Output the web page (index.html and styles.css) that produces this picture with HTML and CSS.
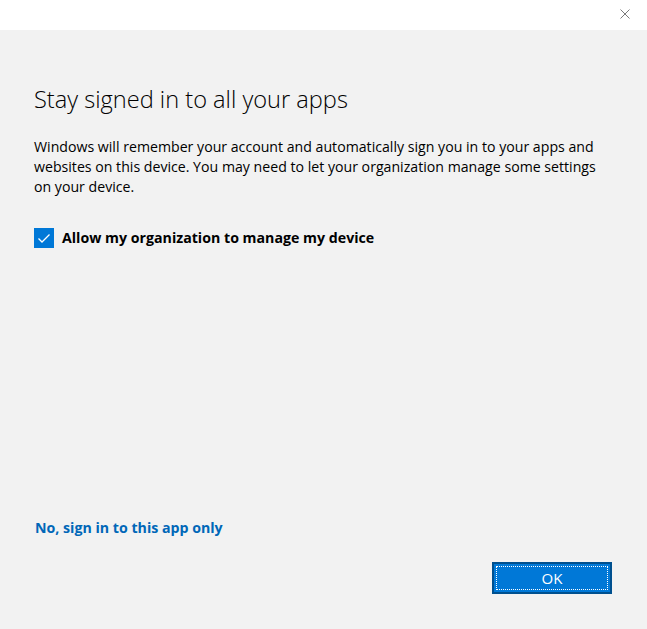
FILE: index.html
```html
<!DOCTYPE html>
<html lang="en">
<head>
<meta charset="utf-8">
<title>Stay signed in to all your apps</title>
<link rel="stylesheet" href="styles.css">
</head>
<body>
<div class="window">
  <div class="titlebar">
    <button class="close" aria-label="Close">
      <svg width="10" height="10" viewBox="0 0 10 10"><path d="M0.5 0.5 L9.5 9.5 M9.5 0.5 L0.5 9.5" stroke="#7a7a7a" stroke-width="1" fill="none"/></svg>
    </button>
  </div>
  <div class="content">
    <h1 class="title">Stay signed in to all your apps</h1>
    <p class="desc">Windows will remember your account and automatically sign you in to your apps and websites on this device. You may need to let your organization manage some settings on your device.</p>
    <label class="check">
      <span class="box">
        <svg width="20" height="20" viewBox="0 0 20 20"><path d="M4.5 10.5 L8 14 L15.5 6.5" stroke="#ffffff" stroke-width="1.3" fill="none"/></svg>
      </span>
      <span class="check-label">Allow my organization to manage my device</span>
    </label>
    <div class="spacer"></div>
    <a class="link" href="#">No, sign in to this app only</a>
    <div class="actions">
      <button class="ok"><span class="focus">OK</span></button>
    </div>
  </div>
</div>
</body>
</html>
```
FILE: styles.css
```css
html, body {
  margin: 0;
  padding: 0;
  height: 100%;
}
body {
  font-family: "Open Sans", "Noto Sans", "Liberation Sans", sans-serif;
  background: #f2f2f2;
  color: #000;
}
.window {
  display: flex;
  flex-direction: column;
  height: 629px;
}
.titlebar {
  height: 30px;
  background: #ffffff;
  display: flex;
  justify-content: flex-end;
  align-items: flex-start;
}
.close {
  border: 0;
  background: transparent;
  padding: 0;
  margin: 9px 17px 0 0;
  width: 10px;
  height: 10px;
  display: block;
}
.close svg { display: block; }
.content {
  flex: 1;
  display: flex;
  flex-direction: column;
  padding: 0 34px 35px 34px;
  background: #f2f2f2;
}
.title {
  margin: 53px 0 0 0;
  font-size: 23.6px;
  font-weight: 300;
  line-height: 32px;
  color: #000;
  letter-spacing: 0;
}
.desc {
  margin: 22px 0 0 0;
  font-size: 14.15px;
  line-height: 20px;
  color: #000;
  width: 566px;
}
.check {
  margin-top: 31px;
  display: flex;
  align-items: center;
  gap: 8px;
}
.box {
  width: 20px;
  height: 20px;
  background: #0078d7;
  display: block;
}
.box svg { display: block; }
.check-label {
  font-size: 14.2px;
  font-weight: 700;
  line-height: 20px;
}
.spacer { flex: 1; }
.link {
  font-size: 14.2px;
  font-weight: 700;
  color: #0067b8;
  text-decoration: none;
  line-height: 20px;
  align-self: flex-start;
  margin-left: 1px;
}
.actions {
  display: flex;
  justify-content: flex-end;
  margin-top: 24px;
  padding-right: 1px;
}
.ok {
  width: 120px;
  height: 32px;
  background: #0078d7;
  border: 2px solid #00508f;
  padding: 2px;
  box-sizing: border-box;
  font-family: inherit;
  color: #ffffff;
  font-size: 15px;
  display: flex;
}
.focus {
  flex: 1;
  border: 1px dotted #ffffff;
  display: flex;
  align-items: center;
  justify-content: center;
  line-height: 1;
}
```
